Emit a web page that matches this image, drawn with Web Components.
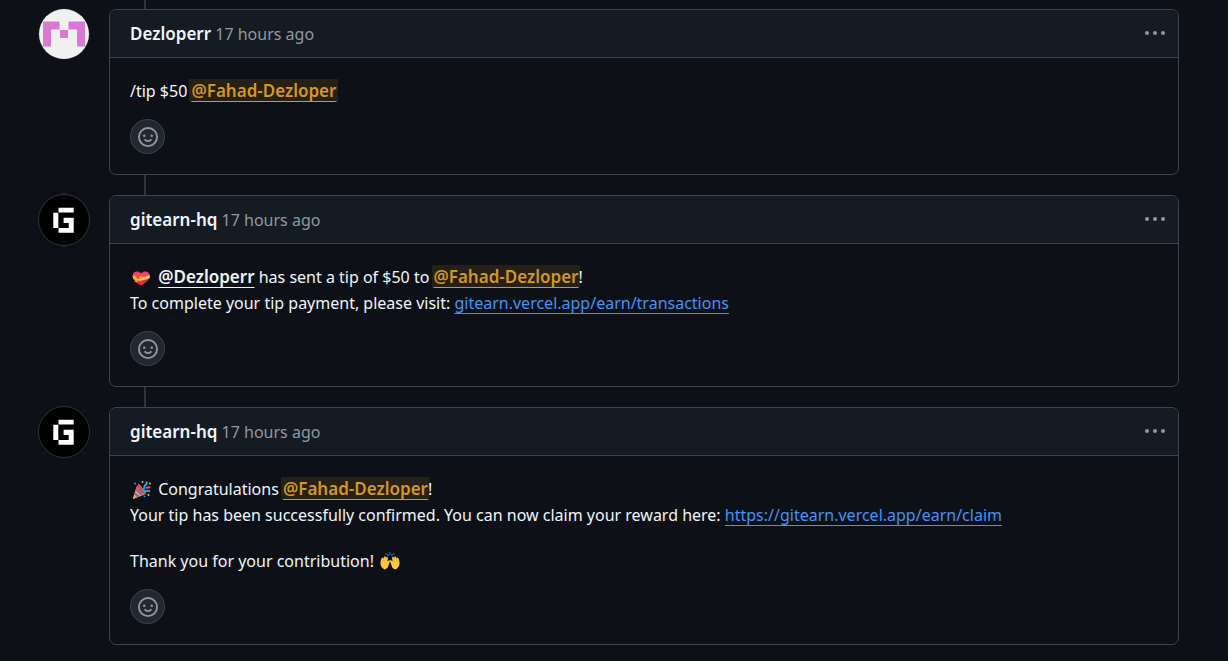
<!DOCTYPE html>
<html lang="en">
<head>
<meta charset="utf-8">
<meta name="viewport" content="width=device-width, initial-scale=1">
<title>Conversation</title>
<style>
  body {
    margin: 0;
    background: #0d1117;
    color: #f0f6fc;
    font: 16px/26px "Noto Sans", "Open Sans", sans-serif;
  }
  p { margin: 0 0 20px; }
  p:last-of-type { margin-bottom: 0; }
</style>
</head>
<body>
<comment-timeline>
  <timeline-comment author="Dezloperr" when="17 hours ago">
    <pixel-avatar slot="avatar"></pixel-avatar>
    <p>/tip $50 <user-mention self>@Fahad-Dezloper</user-mention></p>
  </timeline-comment>
  <timeline-comment author="gitearn-hq" when="17 hours ago">
    <gitearn-avatar slot="avatar"></gitearn-avatar>
    <p><emoji-icon name="heart"></emoji-icon> <user-mention>@Dezloperr</user-mention> has sent a tip of $50 to <user-mention self>@Fahad-Dezloper</user-mention>!<br>To complete your tip payment, please visit: <text-link href="#transactions">gitearn.vercel.app/earn/transactions</text-link></p>
  </timeline-comment>
  <timeline-comment author="gitearn-hq" when="17 hours ago">
    <gitearn-avatar slot="avatar"></gitearn-avatar>
    <p><emoji-icon name="party"></emoji-icon> Congratulations <user-mention self>@Fahad-Dezloper</user-mention>!<br>Your tip has been successfully confirmed. You can now claim your reward here: <text-link href="#claim">https://gitearn.vercel.app/earn/claim</text-link></p>
    <p>Thank you for your contribution! <emoji-icon name="hands"></emoji-icon></p>
  </timeline-comment>
</comment-timeline>

<script>
const define = (name, html, setup) => {
  const template = document.createElement('template');
  template.innerHTML = html;
  customElements.define(name, class extends HTMLElement {
    constructor() {
      super();
      this.attachShadow({ mode: 'open' }).append(template.content.cloneNode(true));
    }
    connectedCallback() { if (setup) setup(this, this.shadowRoot); }
  });
};

define('comment-timeline', `
  <style>
    :host { display: block; padding: 0 49px 16px 38px; }
    ::slotted(:first-child) { --connector: 9px; }
  </style>
  <slot></slot>`);

define('timeline-comment', `
  <style>
    :host { display: grid; grid-template-columns: 52px minmax(0, 1fr); column-gap: 19px; }
    .connector { grid-column: 2; width: 2px; height: var(--connector, 20px); margin-left: 35px; background: #2f353d; }
    .avatar { grid-column: 1; margin-top: -1px; }
    article { grid-column: 2; border: 1px solid #3d444d; border-radius: 7px; overflow: hidden; }
    header { display: flex; align-items: center; justify-content: space-between; height: 47px; padding: 0 12px 0 20px; background: #151b23; border-bottom: 1px solid #3d444d; }
    .author { color: #f0f6fc; font-size: 17px; font-weight: 600; text-decoration: none; }
    .when { color: #9198a1; text-decoration: none; }
    button { padding: 0; cursor: pointer; color: #9198a1; }
    svg { display: block; fill: currentColor; }
    .menu { border: 0; background: none; }
    .body { padding: 20px; }
    .react { display: grid; place-items: center; width: 35px; height: 35px; margin-top: 15px; border: 1px solid #3d444d; border-radius: 50%; background: #212830; }
  </style>
  <div class="connector"></div>
  <div class="avatar"><slot name="avatar"></slot></div>
  <article>
    <header>
      <div><a class="author" href="#author"></a> <a class="when" href="#comment"></a></div>
      <button class="menu" type="button" aria-label="Show options">
        <svg width="22" height="20" viewBox="0 0 22 20"><circle cx="3" cy="9" r="2"/><circle cx="11" cy="9" r="2"/><circle cx="19" cy="9" r="2"/></svg>
      </button>
    </header>
    <div class="body">
      <slot></slot>
      <button class="react" type="button" aria-label="Add reaction">
        <svg width="20" height="20" viewBox="0 0 16 16"><path d="M8 0a8 8 0 1 1 0 16A8 8 0 0 1 8 0ZM1.500 8a6.500 6.500 0 1 0 13 0 6.500 6.500 0 0 0-13 0Zm3.820 1.636a.75.75 0 0 1 1.038.175l.007.009c.103.118.22.222.35.31.264.178.683.37 1.285.37.602 0 1.020-.192 1.285-.371.13-.088.247-.192.35-.31l.007-.008a.75.75 0 0 1 1.222.87l-.022.030c-.182.248-.422.49-.714.687-.489.328-1.200.602-2.128.602-.926 0-1.638-.274-2.127-.603-.31-.21-.5-.4-.713-.687-.165-.22-.2-.76.160-1.074ZM5 6a1 1 0 1 1 0 2 1 1 0 0 1 0-2Zm6 0a1 1 0 1 1 0 2 1 1 0 0 1 0-2Z"/></svg>
      </button>
    </div>
  </article>`, (host, root) => {
    root.querySelector('.author').textContent = host.getAttribute('author');
    root.querySelector('.when').textContent = host.getAttribute('when');
  });

define('user-mention', `
  <style>
    :host { font-size: 17px; font-weight: 600; line-height: 0; }
    a { color: #f0f6fc; text-decoration: underline; text-decoration-thickness: 1px; text-underline-offset: 4px; }
    :host([self]) { background: #272015; border-radius: 1px; box-shadow: -2px 0 #272015, 2px 0 #272015; }
    :host([self]) a { color: #d29922; }
  </style><a href="#user"><slot></slot></a>`);

define('text-link', `
  <style>a { color: #4493f8; text-decoration: underline; text-decoration-thickness: 1px; text-underline-offset: 4px; }</style><a><slot></slot></a>`,
  (host, root) => { root.querySelector('a').href = host.getAttribute('href'); });

define('pixel-avatar', `
  <style>:host, svg { display: block; }</style>
  <svg width="52" height="52" viewBox="0 0 52 52" role="img" aria-label="Dezloperr">
    <circle cx="26" cy="26" r="25.500" fill="#24282e"/><circle cx="26" cy="26" r="25" fill="#f0f0f0"/>
    <path fill="#d879d4" d="M5 13.500h16.500v8h-8.500v17h-8zM30.500 13.500h16.500v25h-8v-17h-8.500zM22 22h8v8h-8z"/>
  </svg>`);

define('gitearn-avatar', `
  <style>:host, svg { display: block; }</style>
  <svg width="52" height="52" viewBox="0 0 52 52" role="img" aria-label="gitearn-hq">
    <circle cx="26" cy="26" r="25.500" fill="#000" stroke="#30343a"/>
    <g fill="#fff"><path d="M20.500 13.700h15.200v4.900h-15.200zM15.300 18.700h4.800v15.200h-4.800zM25.600 23.800h10.100v15h-15.200v-4.700h10.200v-5.200h-5.100z"/></g>
    <path d="M20.500 18.700v15.200" stroke="#777" stroke-width=".6"/>
  </svg>`);

const hand = `<path fill="#ffc83d" d="M6.500 18.500c-2.500-1.200-4.300-4-4-6.500.1-3 1-5.500 2.100-5.500.6 0 .8.800.7 1.600.5-1.800 1-3 1.800-2.900.7.1.8 1 .6 2 .6-1.200 1.200-1.800 1.800-1.400.8.500.1 3.500-.2 5 1-1.500 2.200-2.200 2.700-1.200.4 1-1 2.400-1.300 4-.3 2.300-1.500 4.400-4.200 4.900z"/><path fill="none" stroke="#e59a25" stroke-width=".6" d="M5.300 8.100 5 11M7.700 7.200l-.4 3.500"/>`;

const emoji = {
  heart: ['Heart with ribbon', `
    <g transform="translate(.8 2.300) scale(.86)">
    <path fill="#f43f67" d="M12 18.500C7 15.500 2 12 2 7.500 2 2.500 9 .8 12 5c3-4.200 10-2.500 10 2.500 0 4.500-5 8-10 11z"/>
    <path fill="#d92d59" d="M12 18.500C8 16 5 14 3.500 11.500c5 2.500 12.500 1.500 17.500-1.500-1.500 3.500-5 6-9 8.500z"/>
    <path fill="#ffca45" d="M2 7.500c5 2.800 13 2.500 20-1v3.500c-6 3-14 3.500-19 1.200z"/>
    <path fill="#f7a928" d="M8 9.500 3.500 6.800c-1 1.500-1 4 .2 5zM8.500 9.500 13 7c1 2 .5 4-1 5zM7 10l-3 5 2.500-.5 1 2 1.500-6zM9 10l4 3-2 .5-.2 2z"/>
    <rect x="6.800" y="8.300" width="3" height="3" rx="1" fill="#c96f16"/>
    </g>`],
  party: ['Party popper', `
    <g transform="translate(0 1)">
    <path fill="#f5a742" d="m7 5.500 9 8.500-12 4.800c-.8.300-1.300-.3-1-1z"/>
    <path fill="#7563be" d="m4.700 12 5.400 4.400-2.500 1L4 14zM6.200 8l7.300 7-2.200.9L5.500 10z"/>
    <ellipse cx="11.500" cy="10" rx="6" ry="2" transform="rotate(43 11.500 10)" fill="#c85232"/>
    <path fill="none" stroke="#29a7df" stroke-width="2" d="M12.500 10c3-1 1-4 3-5s1-2 1.200-3.500M14 12c2-2 4-1 6-1"/>
    <path fill="none" stroke="#f04483" stroke-width="2" d="M11 8c0-2-3-2-2-4M16 8.500c1-2 3 0 4-2"/>
    <g fill="#f9b93e"><circle cx="12.500" cy="2" r="1"/><circle cx="20" cy="3.500" r="1"/><circle cx="18.500" cy="15" r="1"/></g>
    <g fill="#29a7df"><circle cx="5" cy="3.500" r="1"/><circle cx="14.500" cy="16.500" r=".8"/></g>
    </g>`],
  hands: ['Raising hands', `
    ${hand}<g transform="matrix(-1 0 0 1 24 0)">${hand}</g>
    <path stroke="#1769b5" stroke-width="1.300" d="m10.500 5-1-2M12 4V1.500M13.500 5l1-2M8.500 3.500 7.500 2.500M15.500 3.500l1-1"/>`]
};
define('emoji-icon', `
  <style>svg { width: 24px; height: 20px; vertical-align: -4px; }</style><svg viewBox="0 0 24 20" role="img"></svg>`,
  (host, root) => {
    const [label, shapes] = emoji[host.getAttribute('name')];
    const svg = root.querySelector('svg');
    svg.setAttribute('aria-label', label);
    svg.innerHTML = shapes;
  });
</script>
</body>
</html>
